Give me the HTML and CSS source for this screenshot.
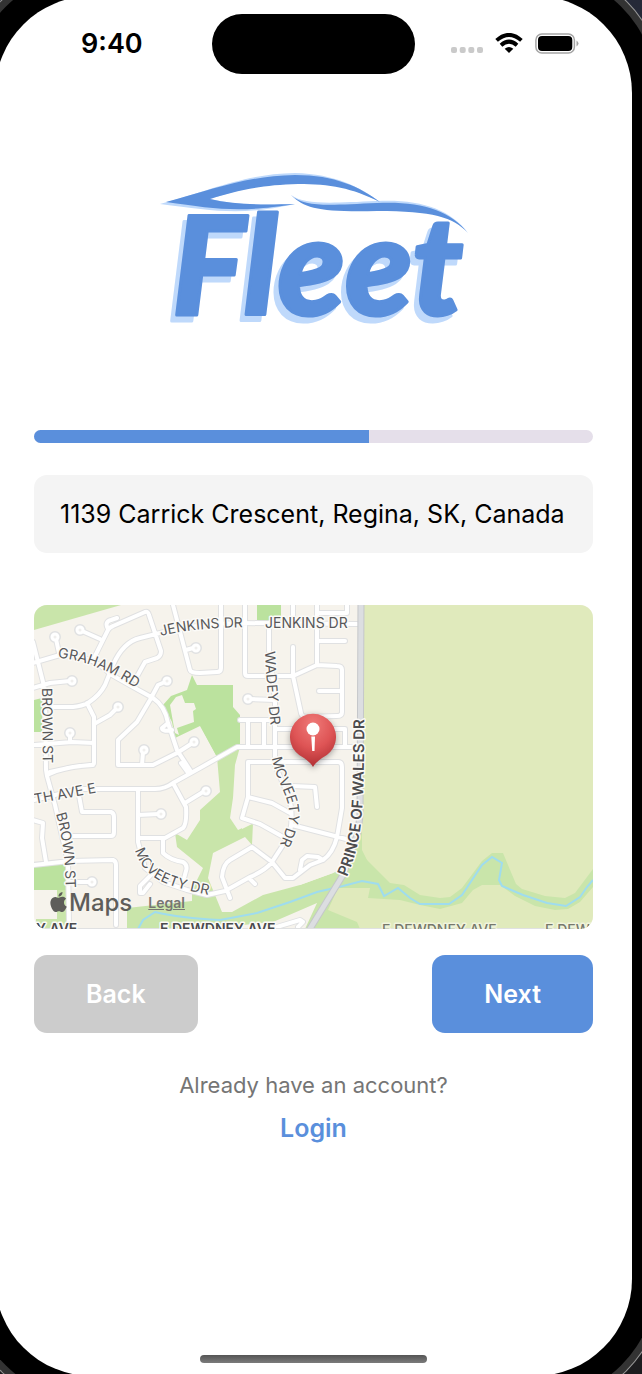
FILE: index.html
```html
<!DOCTYPE html>
<html lang="en">
<head>
<meta charset="utf-8">
<meta name="viewport" content="width=device-width, initial-scale=1">
<title>Fleet – Sign up</title>
<link rel="stylesheet" href="styles.css">
</head>
<body>
<div class="screen">
  <header class="status">
    <span class="status-time">9:40</span>
    <span class="island"></span>
    <span class="status-icons">
      <svg class="icon-signal" viewBox="0 0 32 6" aria-hidden="true"><g fill="#cacaca"><rect width="6" height="6" rx="2"/><rect x="8.7" width="6" height="6" rx="2"/><rect x="17.3" width="6" height="6" rx="2"/><rect x="26" width="6" height="6" rx="2"/></g></svg>
      <svg class="icon-wifi" viewBox="0 0 28 20" aria-hidden="true"><path d="M14 20 9.700 15.700Q14 12.300 18.300 15.700Z"/><g fill="none" stroke="#000" stroke-width="3.900"><path d="M1.600 7.400Q14-3.600 26.400 7.400"/><path d="M6 12.200Q14 5 22 12.200"/></g></svg>
      <svg class="icon-battery" viewBox="0 0 44 21" aria-hidden="true"><rect x=".9" y=".9" width="38.500" height="19.200" rx="6" fill="none" stroke="#a5a5a5" stroke-width="1.500"/><rect x="3" y="3" width="34.300" height="15" rx="4"/><path d="M41.500 7.500q4 3 0 6z" fill="#a5a5a5"/></svg>
    </span>
  </header>

  <main class="content">
    <svg class="logo" viewBox="154 165 326 165" role="img" aria-label="Fleet">
      <g class="logo-glow">
        <path d="M160 204C215 189 245 174 295 173C335 174 360 187 380 202C352 187 330 183 298 183C260 184 235 191 210 199C235 205 262 205 295 204C240 216 215 211 160 204Z"/>
        <path d="M291 195C305 205 330 203 377 201C420 199 450 209 468 233C453 216 433 210 377 210C320 210 305 208 291 195Z"/>
      </g>
      <g class="logo-car">
        <path d="M166 202C215 189 245 176 295 175C335 175 360 187 380 202C352 188 330 184 298 184C260 185 235 191 210 199C235 205 262 205 295 204C240 213 215 209 166 202Z"/>
        <path d="M291 195C305 208 330 205 377 203C420 201 450 210 468 233C453 217 433 211 377 211C320 212 305 209 291 195Z"/>
      </g>
      <text class="logo-word" x="172" y="315">Fleet</text>
    </svg>

    <progress class="progress" value="60" max="100" aria-label="Sign-up progress"></progress>

    <input class="address" type="text" value="1139 Carrick Crescent, Regina, SK, Canada" aria-label="Address">

    <section class="map" aria-label="Map">
      <svg class="map-canvas" viewBox="34 605 559 324">
        <defs>
          <path id="roads" d="M33 642 45 690 46 770 47 776 55 805 68 862 69 925
          M33 663 60 655Q93 655 110 674L133 687 153 698Q165 706 168 723L177 750 190 770
          M93 660 108 630Q110 627 113 626L145 612Q148 611 149 615L161 651Q161 656 157 658L145 662 135 680
          M108 629Q104 622 111 620L117 618M82 631 100 639M56 639 59 653
          M46 707H73Q82 706 88 703Q100 695 105 685L113 665Q123 642 140 638L160 633Q200 623 240 623L357 624
          M33 688 50 683 70 681M87 703 94 717V763Q94 765 90 765L73 767 50 772
          M94 724 110 715 116 709M33 745 72 742 94 743M70 735V742
          M165 682 158 685 150 700 137 722 118 740V765H153L177 753 191 744M143 752 142 765
          M168 723 162 728Q162 732 172 730M173 605 190 670Q191 673 200 673L217 672Q221 672 221 668V605
          M186 650 193 648M245 605V673Q245 676 248 676H293L317 665 337 666Q342 666 342 670V712Q342 716 337 716L306 717Q301 716 301 713L293 676V647
          M317 605V665M317 641H345M319 691H342M317 613H347V605M293 605V624
          M269 623V650L275 700V765L288 795Q294 812 290 832L283 845 272 862Q266 870 250 877L225 891 207 895 187 890 163 882 145 868 138 842V790
          M250 699 275 700M240 720H275M248 720V747M264 720V747M275 729H345V747
          M357 747H237L200 768 173 783Q165 789 155 789H80L34 800
          M248 762H338Q342 762 342 767V808L337 837Q333 853 323 860L310 865 293 878H285L272 862 252 847 230 860Q223 864 222 877L230 898
          M248 762V797L242 818 260 824 285 838M248 797 272 803 290 813M292 825 350 840M292 786 315 787 317 807
          M300 870 302 860 307 856 318 857 323 860M249 878 255 884
          M78 790 82 812H111Q114 813 114 817V832Q114 836 111 836H66
          M138 815 159 814M138 838H165L183 828Q187 824 186 807L173 783M185 803 203 792
          M163 838V853Q170 860 183 862Q188 865 186 871L183 882M47 775Q65 766 93 765M181 763 189 774
          M33 820 43 823 42 838 46 862M33 865 70 861 113 860Q116 861 116 865V925M70 882H90
          M150 876 140 886V893H143L150 884M270 929 300 920 303 922 298 927"/>
          <g id="courts"><circle cx="80" cy="630" r="3"/><circle cx="55" cy="637" r="3"/><circle cx="72" cy="681" r="3"/><circle cx="118" cy="707" r="3"/><circle cx="70" cy="733" r="3"/><circle cx="167" cy="681" r="3"/><circle cx="144" cy="750" r="3"/><circle cx="194" cy="742" r="3"/><circle cx="196" cy="648" r="3"/><circle cx="248" cy="699" r="3"/><circle cx="161" cy="814" r="3"/><circle cx="206" cy="791" r="3"/><circle cx="92" cy="882" r="3"/></g>
          <path id="graham" d="M58 658Q95 660 142 692"/>
          <path id="jenkins" d="M161 636Q195 627 260 627"/>
          <path id="brown-north" d="M42 688 43 780"/>
          <path id="brown-south" d="M56 814Q66 848 66 900"/>
          <path id="wadey" d="M265 652Q266 680 272 740"/>
          <path id="mcveety-north" d="M272 758C275 780 291 798 289 817Q287 829 275 856"/>
          <path id="mcveety-south" d="M135 850C145 880 165 887 220 897"/>
          <path id="wales" d="M347 877C362 840 365 820 364 690"/>
          <path id="avenue" d="M35 804 105 791"/>
          <radialGradient id="pin-fill" cx=".5" cy=".2" r=".8"><stop offset="0" stop-color="#ef7a78"/><stop offset=".55" stop-color="#de5455"/><stop offset="1" stop-color="#b02f33"/></radialGradient>
        </defs>
        <rect class="land" x="34" y="605" width="559" height="324"/>
        <g class="green">
          <path d="M34 605H121L34 630Z"/>
          <path d="M200 725 240 715V747L235 765 233 798 230 818 238 830 253 823 252 845 245 837 213 853 208 878 222 912H232L263 895 300 885 333 873 358 862V605H368V929H305L317 903 273 922 200 929H127V908L192 901V890L203 868 177 847 175 833 187 840 200 820 200 810 220 792 217 757Z"/>
          <path d="M57 889H67V929H36V919H57Z"/>
        </g>
        <path class="land" d="M242 605H355V850L333 873 300 885 256 850 254 823 242 829Z"/>
        <g class="park">
          <path d="M34 700 42 698V732H34ZM34 867 67 863V890H34ZM257 605H281V622H257Z"/>
          <path d="M192 675 197 685H233V707L240 715V747L217 757 200 726 175 738 172 722 163 705 171 696 187 690Z"/>
        </g>
        <path class="land" d="M176 697 182 695 185 703 194 703 196 709 193 711 194 722 177 728 179 735 175 733 173 722 170 705Z"/>
        <path class="field" d="M362 605H593V929H360L357 922 328 910 338 888H370L368 862 362 850Z"/>
        <path class="green" d="M355 840 362 855 390 883 404 885 420 895 440 898 450 897 462 888 482 861 492 853H503L516 884 522 889 545 896 565 898 575 893 593 869V887L580 902 568 909 555 910 535 906 515 896 500 885H482L473 890 462 903 440 909 420 905 400 900 368 898 370 888H338Z"/>
        <path class="river" d="M138 929 143 920 155 912Q180 918 220 920L257 913 290 902 317 892 343 886 362 881 378 884 384 896 398 888 410 898 420 904H449L462 895 482 865 492 857 502 863 499 880 502 886 523 895 547 903 566 906 580 897 587 887 593 880"/>
        <use href="#roads" class="road-edge"/><use href="#courts" class="road-edge"/>
        <use href="#roads" class="road"/><use href="#courts" class="court"/>
        <path class="highway-edge" d="M361 602 360 815 358 832 343 875 308 932"/>
        <path class="highway" d="M361 602 360 815 358 832 343 875 308 932"/>
        <path class="road-edge" d="M34 931H593"/>
        <g class="label">
          <text><textPath href="#graham">GRAHAM RD</textPath></text>
          <text><textPath href="#jenkins">JENKINS DR</textPath></text>
          <text x="265" y="628">JENKINS DR</text>
          <text><textPath href="#brown-north">BROWN ST</textPath></text>
          <text><textPath href="#brown-south">BROWN ST</textPath></text>
          <text><textPath href="#wadey">WADEY DR</textPath></text>
          <text><textPath href="#mcveety-north">MCVEETY DR</textPath></text>
          <text><textPath href="#mcveety-south">MCVEETY DR</textPath></text>
          <text><textPath href="#avenue">TH AVE E</textPath></text>
        </g>
        <g class="label label-main">
          <text class="label-wales"><textPath href="#wales">PRINCE OF WALES DR</textPath></text>
          <text x="36" y="934">Y AVE</text>
          <text x="160" y="934">E DEWDNEY AVE</text>
        </g>
        <g class="label label-field">
          <text x="382" y="935">E DEWDNEY AVE</text>
          <text x="545" y="935">E DEWDNEY AVE</text>
        </g>
        <g class="pin">
          <path fill="url(#pin-fill)" d="M313 767Q311 763 304 758A23 23 0 1 1 322 758Q315 763 313 767Z"/>
          <circle cx="313" cy="729" r="6.500" fill="#fff"/><path fill="#fff" d="M311.300 736.500H315L314.500 751H312.200Z"/>
        </g>
      </svg>
      <div class="attribution">
        <span class="brand"><svg class="apple" viewBox="2 0 20 24" aria-hidden="true"><path d="M12.152 6.896c-.948 0-2.415-1.078-3.960-1.040-2.040.027-3.910 1.183-4.961 3.014-2.117 3.675-.546 9.103 1.519 12.090 1.013 1.454 2.208 3.090 3.792 3.039 1.520-.065 2.090-.987 3.935-.987 1.831 0 2.350.987 3.960.948 1.637-.026 2.676-1.480 3.676-2.948 1.156-1.688 1.636-3.325 1.662-3.415-.039-.013-3.182-1.221-3.220-4.857-.026-3.040 2.480-4.494 2.597-4.559-1.429-2.090-3.623-2.324-4.390-2.376-2-.156-3.675 1.090-4.610 1.090zM15.530 3.830c.843-1.012 1.400-2.427 1.245-3.830-1.207.052-2.662.805-3.532 1.818-.780.896-1.454 2.338-1.273 3.714 1.338.104 2.715-.688 3.559-1.701"/></svg>Maps</span>
        <a class="legal" href="#legal">Legal</a>
      </div>
    </section>

    <div class="actions">
      <button class="button button-back" type="button">Back</button>
      <button class="button button-next" type="button">Next</button>
    </div>

    <p class="prompt">Already have an account?</p>
    <a class="login" href="#login">Login</a>
  </main>

  <div class="home-indicator"></div>
</div>
</body>
</html>
```

FILE: styles.css
```css
* { box-sizing: border-box; }

body {
  margin: 0;
  overflow: hidden;
  display: flex;
  flex-direction: column;
  background: linear-gradient(#252938, #1c1c1e);
  font-family: Inter, "Liberation Sans", sans-serif;
  color: #000;
}

/* The bezel is drawn as rings around the rounded screen. */
.screen {
  flex: 1 0 auto;
  display: flex;
  flex-direction: column;
  min-height: calc(100vh + 6px);
  margin: -4px 10px -2px -5px;
  border-radius: 97px;
  background: #fff;
  box-shadow: 0 0 0 25px #000, 0 0 0 32px #333, 0 0 0 33px #999;
}

.status {
  display: grid;
  grid-template-columns: 131px auto 1fr;
  align-items: center;
  padding: 18px 53px 0 86px;
}
.status-time { font-size: 27px; line-height: 32px; font-weight: 600; }
.island { width: 203px; height: 60px; border-radius: 30px; background: #000; }
.status-icons { display: flex; align-items: center; justify-content: flex-end; gap: 12px; padding-bottom: 2px; }
.icon-signal { width: 32px; height: 6px; margin-top: 14px; }
.icon-wifi { width: 28px; height: 20px; }
.icon-battery { width: 44px; height: 21px; }

.content {
  display: flex;
  flex-direction: column;
  padding: 91px 39px 0;
}

.logo { align-self: center; width: 326px; margin-left: 7px; overflow: visible; }
.logo-glow { fill: #bfd9fb; }
.logo-car { fill: #5a8fdc; }
.logo-word {
  font-family: Lato, sans-serif;
  font-size: 138px;
  font-weight: 900;
  font-style: italic;
  fill: #5a8fdc;
  stroke: #5a8fdc;
  stroke-width: 3px;
  stroke-linejoin: round;
  filter: drop-shadow(-5px 6px 0 #bfd9fb);
}

.progress {
  appearance: none;
  width: 100%;
  height: 13px;
  margin-top: 100px;
  border: 0;
  border-radius: 7px;
  overflow: hidden;
  background: #e5dfea;
}
.progress::-webkit-progress-bar { background: #e5dfea; }
.progress::-webkit-progress-value { background: #5a8fdc; }

.address {
  width: 100%;
  height: 78px;
  margin-top: 32px;
  padding: 0 26px;
  border: 0;
  border-radius: 13px;
  background: #f4f4f4;
  font: 25px/32px Inter, "Liberation Sans", sans-serif;
  color: #000;
}

.map {
  position: relative;
  margin-top: 52px;
  border-radius: 13px;
  overflow: hidden;
}
.map-canvas { display: block; width: 100%; }
.land { fill: #f6f3ec; }
.green { fill: #c9e5aa; }
.park { fill: #bbe29e; }
.field { fill: #e0eabc; }
.river { fill: none; stroke: #9fdcee; stroke-width: 2px; }
.road, .road-edge, .highway, .highway-edge { fill: none; stroke-linejoin: round; stroke-linecap: round; }
.road-edge { stroke: #e0e1e2; stroke-width: 6px; }
.road { stroke: #fff; stroke-width: 4px; }
.court { fill: #f0efed; stroke: #fff; stroke-width: 3px; }
.highway-edge { stroke: #c5c7ca; stroke-width: 7px; }
.highway { stroke: #dcdee1; stroke-width: 5px; }
.label {
  font-size: 14px;
  fill: #58585a;
  stroke: #fbfaf7;
  stroke-width: 3px;
  stroke-linejoin: round;
  paint-order: stroke;
}
.label-main { font-weight: 600; fill: #4c4c4e; }
.label-wales { font-size: 15px; }
.label-field { font-weight: 500; fill: #77796c; stroke: #f0f4dc; }
.pin { filter: drop-shadow(0 2px 3px rgba(0, 0, 0, 0.35)); }

.attribution {
  position: absolute;
  left: 16px;
  bottom: 10px;
  display: flex;
  align-items: center;
  gap: 16px;
  color: #5e5d5a;
}
.brand { display: flex; align-items: center; gap: 2px; font-size: 24px; line-height: 32px; font-weight: 500; }
.apple { width: 17px; height: 20px; margin-bottom: 2px; fill: #5e5d5a; }
.legal { font-size: 14px; line-height: 18px; font-weight: 600; color: #777672; }

.actions { display: flex; justify-content: space-between; margin-top: 26px; }
.button {
  height: 78px;
  padding: 0 52px;
  border: 0;
  border-radius: 13px;
  font: 600 25px/32px Inter, "Liberation Sans", sans-serif;
  color: #fff;
}
.button-back { background: #ccc; }
.button-next { background: #5a8fdc; }

.prompt {
  margin: 37px 0 0;
  font-size: 22px;
  line-height: 30px;
  text-align: center;
  color: #757575;
}
.login {
  align-self: center;
  margin-top: 12px;
  font-size: 25px;
  line-height: 32px;
  font-weight: 600;
  color: #5a8fdc;
  text-decoration: none;
}

.home-indicator {
  align-self: center;
  width: 227px;
  height: 8px;
  margin-top: auto;
  margin-bottom: 13px;
  border-radius: 4px;
  background: linear-gradient(#555, #7b7b7b);
}
```
